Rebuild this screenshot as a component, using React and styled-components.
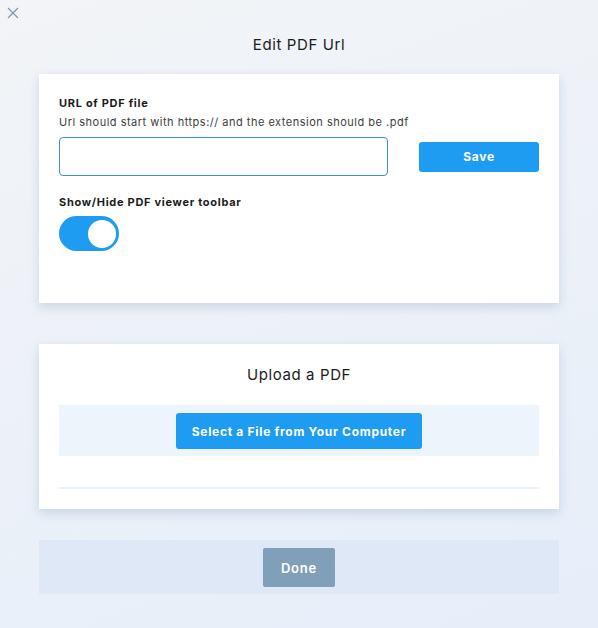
import React, { useState } from 'react';
import styled, { createGlobalStyle } from 'styled-components';

const GlobalStyle = createGlobalStyle`
    html, body {
        margin: 0;
        padding: 0;
    }
    body {
        font-family: Inter, "Liberation Sans", sans-serif;
        color: #1b1b1b;
        background: linear-gradient(160deg, #f2f4f7 0%, #ecf1f8 55%, #e6eefa 100%);
        min-height: 628px;
    }
`;

function CloseIcon() {
    return (
        <svg width="12" height="12" viewBox="0 0 12 12">
            <path d="M1 1 L11 11 M11 1 L1 11" stroke="#7f93ab" strokeWidth="1.1" fill="none" />
        </svg>
    );
}

export default function App() {
    const [toolbar, setToolbar] = useState(true);
    const [url, setUrl] = useState('');

    return (
        <>
            <GlobalStyle />
            <Page>
                <CloseButton aria-label="Close">
                    <CloseIcon />
                </CloseButton>
                <Title>Edit PDF Url</Title>

                <Card>
                    <Label>URL of PDF file</Label>
                    <Hint>Url should start with https:// and the extension should be .pdf</Hint>
                    <InputRow>
                        <UrlInput value={url} onChange={(e) => setUrl(e.target.value)} />
                        <SaveButton>Save</SaveButton>
                    </InputRow>
                    <Label $spaced>Show/Hide PDF viewer toolbar</Label>
                    <Toggle $on={toolbar} onClick={() => setToolbar(!toolbar)}>
                        <Knob $on={toolbar} />
                    </Toggle>
                </Card>

                <UploadCard>
                    <SectionTitle>Upload a PDF</SectionTitle>
                    <DropZone>
                        <SelectButton>Select a File from Your Computer</SelectButton>
                    </DropZone>
                    <Divider />
                </UploadCard>

                <Footer>
                    <DoneButton>Done</DoneButton>
                </Footer>
            </Page>
        </>
    );
}

const Page = styled.div`
    position: relative;
    width: 598px;
    box-sizing: border-box;
    padding: 0 39px;
    display: flex;
    flex-direction: column;
`;

const CloseButton = styled.button`
    position: absolute;
    top: 7px;
    left: 7px;
    padding: 0;
    border: none;
    background: none;
    line-height: 0;
    cursor: pointer;
`;

const Title = styled.h1`
    margin: 35px 0 19px;
    font-size: 15px;
    font-weight: 400;
    line-height: 20px;
    letter-spacing: 0.6px;
    text-align: center;
`;

const Card = styled.div`
    background: #ffffff;
    box-shadow: 0 4px 10px rgba(120, 150, 190, 0.3);
    padding: 21px 20px 52px;
    display: flex;
    flex-direction: column;
    align-items: flex-start;
`;

const Label = styled.div`
    font-size: 11px;
    font-weight: 700;
    line-height: 16px;
    letter-spacing: 0.7px;
    margin-top: ${(p) => (p.$spaced ? '18px' : '0')};
`;

const Hint = styled.div`
    font-size: 11px;
    line-height: 16px;
    letter-spacing: 0.5px;
    color: #3d3d3d;
    margin-top: 3px;
`;

const InputRow = styled.div`
    display: flex;
    align-items: center;
    width: 100%;
    margin-top: 7px;
`;

const UrlInput = styled.input`
    box-sizing: border-box;
    width: 329px;
    height: 39px;
    border: 1px solid #3b8fd4;
    border-radius: 4px;
    padding: 0 10px;
    font: inherit;
    font-size: 12px;
    outline: none;
`;

const BlueButton = styled.button`
    border: none;
    border-radius: 3px;
    background: #1e9cf1;
    color: #ffffff;
    font-family: inherit;
    font-size: 12px;
    font-weight: 700;
    letter-spacing: 0.7px;
    cursor: pointer;
`;

const SaveButton = styled(BlueButton)`
    margin-left: auto;
    width: 120px;
    height: 30px;
`;

const Toggle = styled.button`
    margin-top: 6px;
    width: 60px;
    height: 35px;
    border: none;
    border-radius: 18px;
    padding: 0 3px;
    background: ${(p) => (p.$on ? '#1e9cf1' : '#c7d3df')};
    display: flex;
    align-items: center;
    justify-content: ${(p) => (p.$on ? 'flex-end' : 'flex-start')};
    cursor: pointer;
`;

const Knob = styled.span`
    width: 28px;
    height: 28px;
    border-radius: 50%;
    background: #ffffff;
`;

const UploadCard = styled.div`
    margin-top: 41px;
    background: #ffffff;
    box-shadow: 0 4px 10px rgba(120, 150, 190, 0.3);
    padding: 21px 20px 20px;
    display: flex;
    flex-direction: column;
`;

const SectionTitle = styled.div`
    font-size: 15px;
    line-height: 20px;
    letter-spacing: 0.6px;
    text-align: center;
`;

const DropZone = styled.div`
    margin-top: 20px;
    height: 51px;
    background: #eef4fc;
    display: flex;
    justify-content: center;
    align-items: flex-start;
    padding-top: 8px;
    box-sizing: border-box;
`;

const SelectButton = styled(BlueButton)`
    width: 246px;
    height: 36px;
    font-size: 12px;
`;

const Divider = styled.div`
    margin-top: 31px;
    height: 2px;
    background: #e9f1fb;
`;

const Footer = styled.div`
    margin-top: 31px;
    height: 54px;
    background: #dee8f7;
    display: flex;
    justify-content: center;
    align-items: flex-start;
    padding-top: 8px;
    box-sizing: border-box;
`;

const DoneButton = styled.button`
    width: 72px;
    height: 39px;
    border: none;
    border-radius: 2px;
    background: #7fa0b8;
    color: #ffffff;
    font-family: inherit;
    font-size: 13px;
    font-weight: 600;
    letter-spacing: 0.8px;
    cursor: pointer;
`;
